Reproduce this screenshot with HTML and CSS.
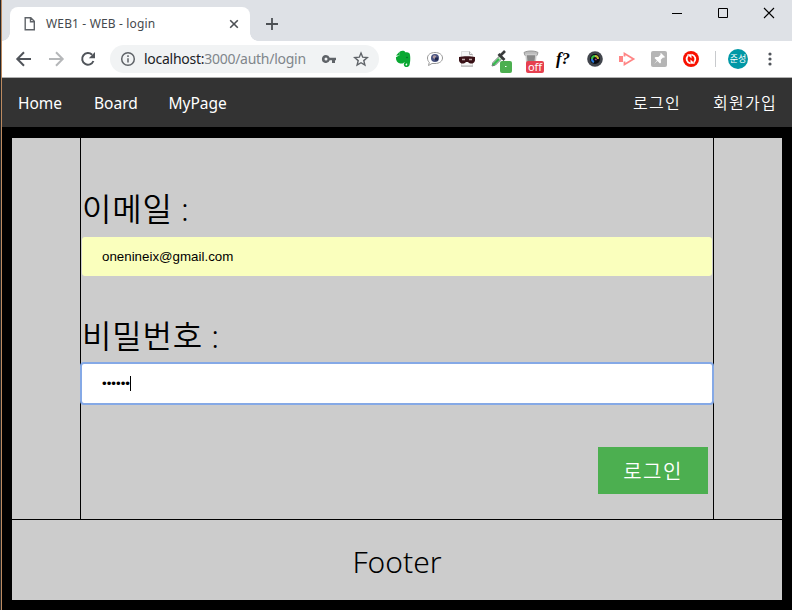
FILE: index.html
```html
<!DOCTYPE html>
<html lang="ko">
<head>
<meta charset="utf-8">
<title>WEB1 - WEB - login</title>
<link rel="stylesheet" href="styles.css">
</head>
<body>
<div class="window">
  <header class="tabstrip">
    <div class="tab">
      <svg class="tab-icon" width="12" height="16" viewBox="0 0 12 16" fill="none" stroke="#5f6368" stroke-width="1.4"><path d="M1.2 1.7h5.6l3.5 3.5v8.6H1.2zM6.5 1.7v4h4"/></svg>
      <span class="tab-title">WEB1 - WEB - login</span>
      <svg width="10" height="10" viewBox="0 0 10 10" stroke="#4c5054" stroke-width="1.6"><path d="M1.2 1.2l7.6 7.6M8.8 1.2L1.2 8.8"/></svg>
    </div>
    <svg class="new-tab" width="12" height="12" viewBox="0 0 12 12" stroke="#4c5054" stroke-width="1.8"><path d="M6 0v12M0 6h12"/></svg>
    <div class="controls">
      <svg width="46" height="26" viewBox="0 0 46 26" stroke="#000"><path d="M18 13.5h10"/></svg>
      <svg width="46" height="26" viewBox="0 0 46 26" stroke="#000" fill="none"><path d="M18.500 8.500h9v9h-9z"/></svg>
      <svg width="46" height="26" viewBox="0 0 46 26" stroke="#000" stroke-width="1.1"><path d="M18 8l10 10M28 8L18 18"/></svg>
    </div>
  </header>

  <div class="toolbar">
    <div class="cells">
      <svg viewBox="0 0 32 32" fill="none" stroke="#50545a" stroke-width="2"><path d="M23 16H10M16 9.300L9.300 16l6.700 6.700"/></svg>
      <svg viewBox="0 0 32 32" fill="none" stroke="#b5b7b9" stroke-width="2"><path d="M9 16h13M16 9.300l6.700 6.700-6.700 6.700"/></svg>
      <svg viewBox="0 0 32 32" fill="none" stroke="#50545a" stroke-width="2"><path d="M21.400 18a5.800 5.800 0 1 1-1.300-6.200"/><path d="M23 9v6.200h-6.200z" fill="#50545a" stroke="none"/></svg>
    </div>
    <div class="address">
      <svg width="16" height="16" viewBox="0 0 16 16" fill="none" stroke="#5f6368" stroke-width="1.500"><circle cx="8" cy="8" r="6.300"/><path d="M8 7.200v4.300M8 4.200v1.700"/></svg>
      <span class="url">localhost:<span>3000/auth/login</span></span>
      <svg class="key" width="16" height="16" viewBox="0 0 16 16" fill="#5f6368"><path fill-rule="evenodd" d="M5 4a4 4 0 1 0 3.700 5.300H11V12h3V9.300h1V6.700H8.700A4 4 0 0 0 5 4zm0 2.500a1.500 1.500 0 1 1 0 3 1.500 1.500 0 0 1 0-3z"/></svg>
      <svg width="16" height="16" viewBox="0 0 16 16" fill="none" stroke="#5f6368" stroke-width="1.400"><path d="M8 2l1.700 4.200 4.600.4-3.500 3 1.100 4.500L8 11.700l-3.900 2.400 1.100-4.500-3.500-3 4.600-.4z"/></svg>
    </div>
    <div class="cells extensions">
      <svg viewBox="0 0 32 32"><path d="M13 8.600c1.500-1.100 4.500-1 5.300.6 2.300 0 3.700.3 4.300 1.400.9 1.800 1 8.500-.1 11.300-.8 2.600-5.100 2.800-5.600.3-.4-2 .5-3 2.500-2.600v1.400c-1.200 0-1.300 1.200-.3 1.400 1.300.3 1.300-1.200.9-2.200-1 .3-2.200-.2-3-1-.5 1.500-2 1.600-3.800 1.200-3-.7-4.200-2.500-4.300-6.200L13 12z" fill="#09a832"/><path d="M9 12.400L12.800 8.500V12.400z" fill="#09a832"/><circle cx="20" cy="14.500" r=".8" fill="#05652a"/></svg>
      <svg viewBox="0 0 32 32"><path d="M16 9.500c4.500 0 7.500 2.300 7.500 5.500s-3 5.500-7.500 5.500l-3 0-3.500 2 .8-3.200c-1.200-1-1.800-2.500-1.800-4.300 0-3.200 3-5.500 7.500-5.500z" fill="#fff" stroke="#999"/><circle cx="16" cy="15" r="4" fill="#485280"/><circle cx="15.500" cy="14" r="1.800" fill="#ad999f"/><path d="M16 14.500h3v3h-3z" fill="#20264c"/></svg>
      <svg viewBox="0 0 32 32"><path d="M10.500 8.500h8l3 3v12h-11z" fill="#f5f5f5" stroke="#ddd"/><path d="M18.500 8.500v3h3" fill="none" stroke="#aaa"/><path d="M8 14c4-1 12-1 16 0v3.500c-1 4-5 3.600-7 1.500h-2c-2 2.100-6 2.500-7-1.500z" fill="#391116"/><path d="M11 16.500h3M18 16.500h3" stroke="#bea9a9" stroke-width="1.700"/><path d="M10 23h12" stroke="#aaa"/></svg>
      <svg viewBox="0 0 32 32"><path d="M9 23l1-3.500 7-7 2.500 2.500-7 7z" fill="#bfeabf" stroke="#71777a"/><path d="M10 22l6-6" stroke="#35b84d" stroke-width="2"/><path d="M15.500 11l6 6M17 13l5-5" stroke="#393b3b" stroke-width="2.700"/><rect x="17" y="18" width="12" height="12" rx="2" fill="#4caf50"/><path d="M22 23.500h1.500" stroke="#fff"/></svg>
      <span class="speed"><svg viewBox="0 0 32 32"><path d="M9 9.500c3-2 11-2 14 0l-1 3H10z" fill="#bbb" stroke="#999"/><path d="M11 11.500h10l-1 9h-8z" fill="#888" stroke="#ccc" stroke-width="1.500"/></svg><b>off</b></span>
      <span class="function">f?</span>
      <svg viewBox="0 0 32 32"><circle cx="16" cy="16" r="7.800" fill="#41454c"/><circle cx="16" cy="16" r="5" fill="#090b10"/><path d="M13 16a3 3 0 0 1 3-3" fill="none" stroke="#37bd46" stroke-width="2"/><path d="M16 13a3 3 0 0 1 3 3" fill="none" stroke="#c5ba37" stroke-width="2"/><path d="M13 16a3 3 0 0 0 2 3" fill="none" stroke="#287cdf" stroke-width="2"/><path d="M16 16l1.500 1" stroke="#b5309a" stroke-width="1.500"/></svg>
      <svg viewBox="0 0 32 32"><path d="M8 13h4v6H8z" fill="#ff8585"/><path d="M13.500 13.500v-3l9 5.500-9 5.500v-3" fill="none" stroke="#ff8585" stroke-width="1.800"/></svg>
      <svg viewBox="0 0 32 32"><rect x="8" y="8" width="16" height="16" rx="2" fill="#b5b5b5"/><path d="M18 10l4 4-1 .8-1-.3-2.200 2.300.2 2.700-1 1-2.500-2.500-3.500 3 3-3.600-2.500-2.500 1-1 2.800.2 2.300-2.300-.4-1z" fill="#fff"/></svg>
      <svg viewBox="0 0 32 32"><circle cx="16" cy="16" r="8" fill="#f81100"/><path d="M15.500 20.500c-4-1.300-5-5-2.500-8M16.500 11.500c4 1.300 5 5 2.500 8" fill="none" stroke="#fff" stroke-width="1.800"/><path d="M12 11.300h4.500v4.200zM20 20.700h-4.500v-4.200z" fill="#fff"/></svg>
    </div>
    <span class="divider"></span>
    <span class="avatar">준성</span>
    <svg class="menu" width="4" height="14" viewBox="0 0 4 14" fill="#50545a"><circle cx="2" cy="2" r="1.600"/><circle cx="2" cy="7" r="1.600"/><circle cx="2" cy="12" r="1.600"/></svg>
  </div>

  <nav class="nav">
    <a class="home">Home</a><a class="board">Board</a><a class="mypage">MyPage</a>
    <a class="korean login-link">로그인</a><a class="korean">회원가입</a>
  </nav>

  <div class="page">
    <main class="main">
      <form class="form">
        <label for="email">이메일<span> :</span></label>
        <input id="email" class="email" type="text" value="onenineix@gmail.com">
        <label for="password">비밀번호<span> :</span></label>
        <div id="password" class="password"><span>••••••</span><i class="caret"></i></div>
        <button type="button">로그인</button>
      </form>
    </main>
    <footer>Footer</footer>
  </div>
</div>
</body>
</html>
```
FILE: styles.css
```css
* { box-sizing: border-box; }
body {
  margin: 0;
  width: 792px;
  height: 610px;
  overflow: hidden;
  background: #000;
  font-family: "Noto Sans", "Noto Sans CJK KR", sans-serif;
}
svg { display: block; flex: none; }
.window {
  height: 610px;
  padding-left: 1px;
  border-left: 1px solid #24272a;
  background: linear-gradient(90deg, #bc8a60 1px, #000 1px);
}
.tabstrip {
  display: flex;
  height: 41px;
  padding-left: 8px;
  background: #dee1e6;
}
.tab {
  position: relative;
  display: flex;
  align-items: center;
  width: 240px;
  height: 34px;
  margin-top: 7px;
  padding: 0 11px 0 14px;
  border-radius: 8px 8px 0 0;
  background: #fff;
}
.tab::before, .tab::after {
  content: "";
  position: absolute;
  bottom: 0;
  width: 8px;
  height: 8px;
}
.tab::before { left: -8px; background: radial-gradient(circle at 0 0, transparent 7.500px, #fff 8px); }
.tab::after { right: -8px; background: radial-gradient(circle at 100% 0, transparent 7.500px, #fff 8px); }
.tab-title {
  flex: 1;
  margin-left: 10px;
  color: #45494d;
  font-size: 12px;
  line-height: 16px;
  letter-spacing: .15px;
  padding-bottom: 1px;
  white-space: nowrap;
}
.new-tab { margin: 18px 0 0 16px; }
.controls { display: flex; margin-left: auto; }
.toolbar {
  display: flex;
  align-items: center;
  height: 37px;
  padding-left: 6px;
  border-bottom: 1px solid #b0b0b0;
  background: #fff;
}
.cells { display: flex; }
.cells > * { width: 32px; height: 32px; flex: none; }
.address {
  display: flex;
  align-items: center;
  width: 269px;
  height: 28px;
  margin-left: 6px;
  padding: 0 10px;
  border-radius: 14px;
  background: #f1f3f4;
}
.url {
  width: 177px;
  margin-left: 8px;
  color: #202124;
  font-size: 14px;
  line-height: 20px;
  letter-spacing: -.27px;
  white-space: nowrap;
}
.url span { color: #80868b; }
.key { margin-right: 16px; }
.extensions { margin-left: 8px; }
.speed { position: relative; }
.speed b {
  position: absolute;
  left: 11px;
  top: 18px;
  width: 18px;
  height: 12px;
  border-radius: 2px;
  background: #e6404f;
  color: #fff;
  font: 11px/12px "Noto Sans", sans-serif;
  text-align: center;
}
.function {
  font: italic bold 17px/32px "Liberation Serif", serif;
  text-align: center;
}
.divider { width: 1px; height: 16px; margin-left: 8px; background: #c8cacd; }
.avatar {
  width: 20px;
  height: 20px;
  margin-left: 12px;
  border-radius: 50%;
  background: #0098a6;
  color: #fff;
  font: 9px/20px "Noto Sans CJK KR", sans-serif;
  text-align: center;
}
.menu { margin-left: 20px; }
.nav {
  display: flex;
  height: 49px;
  padding: 0 15px 0 16px;
  background: #333;
  color: #fff;
  font-size: 15.500px;
  line-height: 50px;
}
.home { width: 76px; }
.board { width: 74.500px; }
.korean {
  font: 350 16px/48px "Noto Sans CJK KR", sans-serif;
  letter-spacing: 1.280px;
}
.login-link { margin: 0 32px 0 auto; }
.page { margin: 11px 10px 10px; background: #ccc; }
.main { height: 382px; border-bottom: 1px solid #000; }
.form {
  display: flex;
  flex-direction: column;
  width: 634px;
  height: 381px;
  margin-left: 68px;
  padding: 46px 0 25px;
  border: solid #000;
  border-width: 0 1px;
}
label {
  height: 53px;
  padding-left: 1px;
  font: 350 32px/46px "Noto Sans CJK KR", sans-serif;
  letter-spacing: .8px;
  white-space: nowrap;
}
label span {
  font-family: "Noto Sans", sans-serif;
  font-weight: 300;
  letter-spacing: 0;
  line-height: 1;
}
.email {
  height: 39px;
  margin: 0 1px 35px;
  padding: 0 20px;
  border: 0;
  border-radius: 3px;
  background: #faffbd;
  color: #000;
  font: 13.333px "Liberation Sans", Arial, sans-serif;
}
label + .password {
  display: flex;
  align-items: center;
  height: 43px;
  margin: -2px -1px 0;
  padding-left: 20px;
  border: 2px solid #85a9e6;
  border-radius: 4px;
  background: #fff;
  font: 13.333px "Liberation Sans", Arial, sans-serif;
}
.caret { width: 1px; height: 15px; background: #000; }
button {
  align-self: flex-end;
  width: 110px;
  height: 47px;
  margin: auto 5px 0 0;
  padding: 0 0 1px;
  border: 0;
  background: #4caf50;
  color: #fff;
  font: 350 20px "Noto Sans CJK KR", sans-serif;
  letter-spacing: 1.500px;
}
footer {
  height: 80px;
  font: 300 30px/84px "Noto Sans", sans-serif;
  text-align: center;
}
```
